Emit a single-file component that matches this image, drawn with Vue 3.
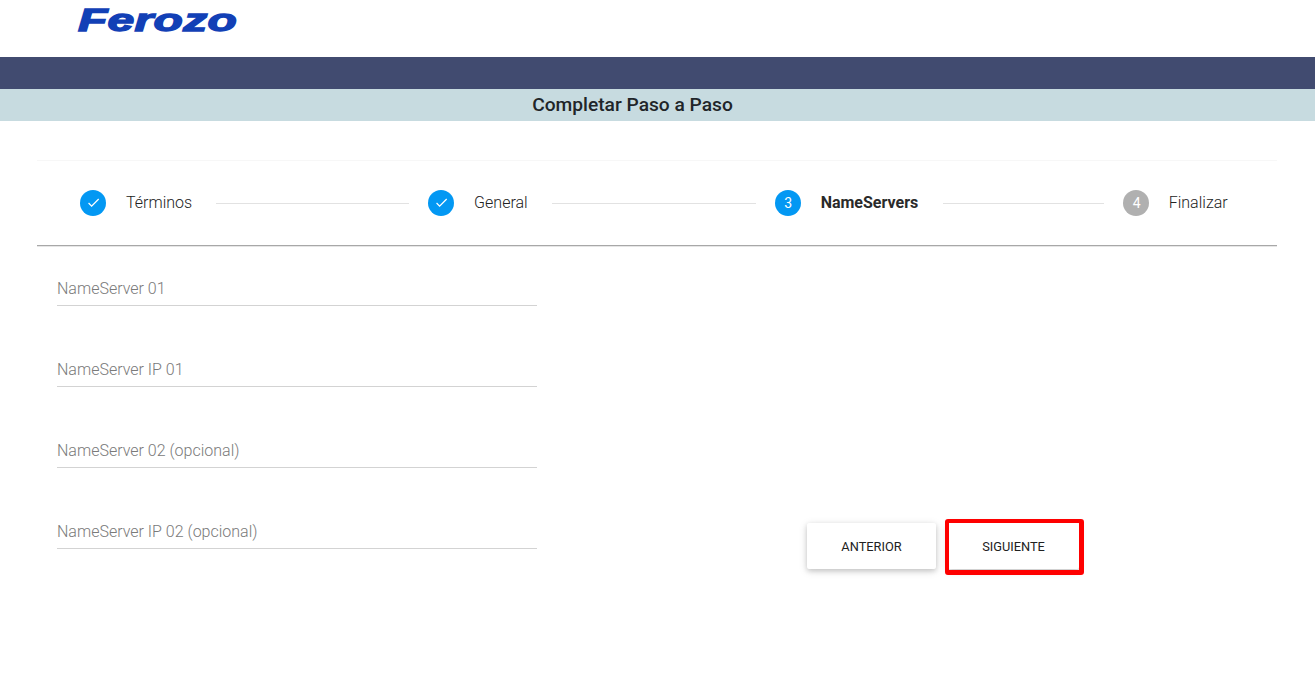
<script setup>
const steps = [
  { label: 'Términos', state: 'done', cls: 'first' },
  { label: 'General', state: 'done', cls: 'second' },
  { label: 'NameServers', state: 'active', n: 3, cls: 'third' },
  { label: 'Finalizar', state: 'todo', n: 4, cls: 'last' },
]
const fields = ['NameServer 01', 'NameServer IP 01', 'NameServer 02 (opcional)', 'NameServer IP 02 (opcional)']
</script>

<template>
  <div class="page">
    <header class="logo-row"><span class="logo">Ferozo</span></header>
    <div class="navy"></div>
    <div class="subbar"><h1>Completar Paso a Paso</h1></div>
    <main class="card">
      <nav class="stepper">
        <template v-for="s in steps" :key="s.label">
          <div class="step" :class="s.state">
            <span class="dot">
              <svg v-if="s.state === 'done'" viewBox="0 0 24 24" width="15" height="15" aria-hidden="true">
                <path d="M9 16.2 4.8 12l-1.4 1.4L9 19 21 7l-1.4-1.4z" fill="#fff" />
              </svg>
              <template v-else>{{ s.n }}</template>
            </span>
            <span class="label">{{ s.label }}</span>
          </div>
          <div v-if="s.cls !== 'last'" class="line" :class="s.cls"></div>
        </template>
      </nav>
      <div class="body">
        <form class="fields">
          <div v-for="f in fields" :key="f" class="field"><span>{{ f }}</span></div>
        </form>
        <div class="actions">
          <button type="button" class="btn prev">ANTERIOR</button>
          <button type="button" class="btn next">SIGUIENTE<i class="mark"></i></button>
        </div>
      </div>
    </main>
  </div>
</template>

<style>
html, body { margin: 0; background: #fff; }
</style>

<style scoped>
.page { height: 678px; overflow: hidden; font-family: Roboto, "Liberation Sans", sans-serif; color: #212121; }
.logo-row { height: 57px; box-sizing: border-box; padding-left: 78px; }
.logo {
  display: inline-block;
  font-family: "Liberation Sans", sans-serif;
  font-weight: 700;
  font-style: italic;
  font-size: 32px;
  line-height: 40px;
  letter-spacing: 0.2px;
  color: #1240b6;
  -webkit-text-stroke: 1.4px #1240b6;
  transform: scaleX(1.5);
  transform-origin: left top;
  height: 40px;
}
.navy { height: 32px; background: #414b70; }
.subbar { height: 32px; background: #c7dbe0; display: flex; justify-content: center; padding-right: 50px; }
.subbar h1 { margin: 0; font-size: 19.2px; font-weight: 500; line-height: 32px; color: #212529; }
.card { margin: 39px 38px 0 37px; border-top: 1px solid #f7f7f7; }
.stepper {
  height: 85px;
  box-sizing: border-box;
  padding: 0 0 1px 43px;
  display: flex;
  align-items: center;
  border-bottom: 1px solid #a8a8a8;
  box-shadow: 0 1px 0 #e6e6e6;
}
.step { display: flex; align-items: center; gap: 20px; }
.dot {
  width: 26px; height: 26px; border-radius: 50%;
  display: flex; align-items: center; justify-content: center;
  background: #0398f3; color: #fff; font-size: 14px; font-weight: 400;
  text-indent: 1px;
}
.todo .dot { background: #b0b0b0; }
.label { font-size: 16px; font-weight: 300; line-height: 20px; color: #222; }
.active .label { font-weight: 700; color: #2a2a2a; }
.todo .label { margin-left: -0.5px; }
.line { height: 1px; background: #e2e2e2; margin: 1px 19px 0 24px; }
.first { width: 193px; }
.second { width: 204px; }
.third { width: 161px; margin-left: 25px; }
.body { display: flex; }
.fields { width: 480px; margin-left: 20px; padding-top: 24px; }
.field {
  height: 36px;
  box-sizing: border-box;
  margin-bottom: 45px;
  border-bottom: 1px solid #d3d3d3;
  font-size: 16px;
  font-weight: 300;
  line-height: 38px;
  color: #7a7a7a;
}
.actions { display: flex; align-items: flex-start; gap: 12px; margin: 277px 0 0 270px; }
.btn {
  position: relative;
  height: 46px;
  padding: 0;
  border: 0;
  border-radius: 2px;
  background: #fff;
  font-family: inherit;
  font-size: 12.8px;
  font-weight: 400;
  color: #212121;
  box-shadow: 0 2px 5px rgba(0,0,0,.16), 0 2px 10px rgba(0,0,0,.12);
}
.prev { width: 129px; }
.next { width: 131px; }
.mark {
  position: absolute;
  left: -3px; right: -5px; top: -4px; bottom: -6px;
  border: solid #fe0000;
  border-width: 4px 5px 5px 4px;
  border-radius: 3px;
}
</style>
